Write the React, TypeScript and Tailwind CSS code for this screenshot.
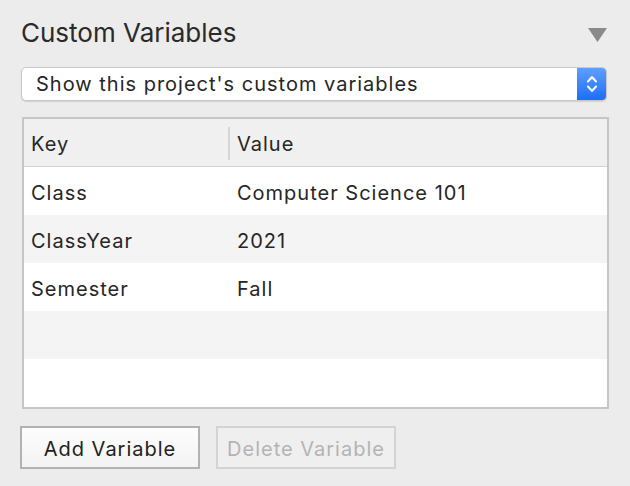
import React from "react"

const rows = [
    { key: "Class", value: "Computer Science 101" },
    { key: "ClassYear", value: "2021" },
    { key: "Semester", value: "Fall" },
    { key: "", value: "" },
    { key: "", value: "" },
]

export default function App() {
    return (
        <div
            className="w-[630px] h-[486px] bg-[#ececec] text-[#262626] pl-[21px] pr-[21px] overflow-hidden"
            style={{ fontFamily: "Inter, 'Noto Sans', sans-serif" }}
        >
            {/* header */}
            <div className="flex items-center justify-between h-[67px] pb-[2px]">
                <h2 className="text-[26px] leading-none text-[#2a2a2a]">Custom Variables</h2>
                <svg width="19" height="15" viewBox="0 0 19 15" className="mr-[2px] mt-[6px]">
                    <polygon points="0,0 19,0 9.5,14" fill="#8a8a8a" />
                </svg>
            </div>

            {/* popup select */}
            <div className="flex h-[34px] w-[586px] rounded-[5px] bg-white border border-[#c9c9c9] shadow-[0_1px_1px_rgba(0,0,0,0.12)] overflow-hidden">
                <div className="flex-1 flex items-center pl-[14px] text-[20px] tracking-[1px] text-[#262626]">
                    Show this project's custom variables
                </div>
                <div className="w-[29px] flex items-center justify-center bg-gradient-to-b from-[#5e9efc] to-[#1a6ef7]">
                    <svg width="12" height="20" viewBox="0 0 12 20" fill="none" stroke="#fff" strokeWidth="2" strokeLinecap="round" strokeLinejoin="round">
                        <polyline points="2,7.5 6,3 10,7.5" />
                        <polyline points="2,12.5 6,17 10,12.5" />
                    </svg>
                </div>
            </div>

            {/* table */}
            <div className="mt-[16px] ml-[1px] w-[587px] border-2 border-[#c6c6c6] bg-white text-[20px] tracking-[1px]">
                <div className="flex h-[48px] bg-[#f0f0f0] border-b border-[#d2d2d2] pt-[2px]">
                    <div className="w-[206px] flex items-center pl-[7px] relative">
                        Key
                        <span className="absolute right-0 top-[6px] bottom-[6px] w-[2px] bg-[#d6d6d6]" />
                    </div>
                    <div className="flex items-center pl-[7px]">Value</div>
                </div>
                {rows.map((r, i) => (
                    <div
                        key={i}
                        className={`flex h-[48px] pt-[3px] ${i % 2 === 1 ? "bg-[#f4f4f4]" : "bg-white"}`}
                    >
                        <div className="w-[206px] flex items-center pl-[7px]">{r.key}</div>
                        <div className="flex items-center pl-[7px]">{r.value}</div>
                    </div>
                ))}
            </div>

            {/* buttons */}
            <div className="flex gap-[16px] mt-[17px] -ml-[1px]">
                <button className="w-[180px] h-[43px] border-2 border-[#b2b2b2] bg-gradient-to-b from-[#fdfdfd] to-[#f3f3f3] text-[20px] tracking-[1px] text-[#222] pt-[2px]">
                    Add Variable
                </button>
                <button disabled className="w-[180px] h-[43px] border-2 border-[#d3d3d3] bg-[#efefef] text-[20px] tracking-[1px] text-[#b4b4b4] pt-[2px]">
                    Delete Variable
                </button>
            </div>
        </div>
    )
}
